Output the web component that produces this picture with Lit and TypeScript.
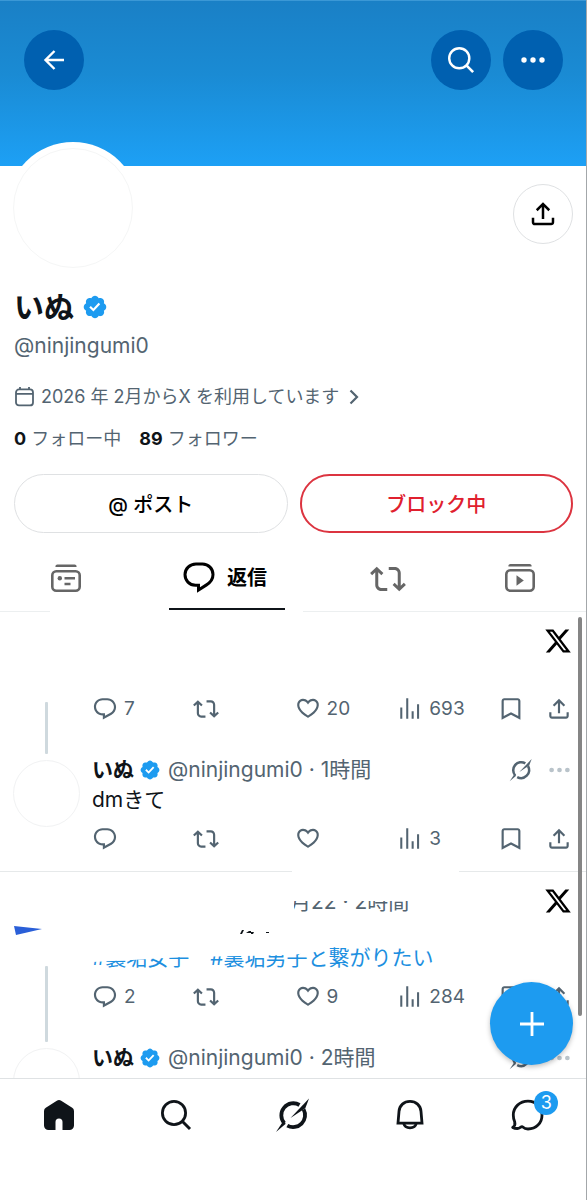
import { LitElement, html, css, svg } from "lit";
import { customElement, property } from "lit/decorators.js";

const BLUE = "#1d9bf0";

const icons: Record<string, { box: string; body: unknown }> = {
  back: {
    box: "0 0 20 20",
    body: svg`<path d="M10.5 1 1.5 10l9 9M2 10h18" fill="none" stroke="currentColor" stroke-width="2.4" />`,
  },
  search: {
    box: "0 0 30 30",
    body: svg`<circle cx="13" cy="13" r="11.6" fill="none" stroke="currentColor" stroke-width="2.8" /><path d="m21 21 8 8" fill="none" stroke="currentColor" stroke-width="3" />`,
  },
  dots: {
    box: "0 0 24 6",
    body: svg`<g fill="currentColor"><circle cx="3" cy="3" r="2.7" /><circle cx="12" cy="3" r="2.7" /><circle cx="21" cy="3" r="2.7" /></g>`,
  },
  share: {
    box: "0 0 24 24",
    body: svg`<path fill="currentColor" d="M12 2.59l5.7 5.7-1.41 1.42L13 6.41V16h-2V6.41l-3.3 3.3-1.41-1.42L12 2.59zM21 15l-.02 3.51c0 1.38-1.12 2.49-2.5 2.49H5.5C4.11 21 3 19.88 3 18.5V15h2v3.5c0 .28.22.5.5.5h12.98c.28 0 .5-.22.5-.5L19 15h2z" />`,
  },
  verified: {
    box: "1 1 20 20",
    body: svg`<path fill="${BLUE}" d="M20.396 11c-.018-.646-.215-1.275-.57-1.816-.354-.54-.852-.972-1.438-1.246.223-.607.27-1.264.14-1.897-.131-.634-.437-1.218-.882-1.687-.47-.445-1.053-.75-1.687-.882-.633-.13-1.29-.083-1.897.14-.273-.587-.704-1.086-1.245-1.44S11.647 1.62 11 1.604c-.646.017-1.273.213-1.813.568s-.969.854-1.24 1.44c-.608-.223-1.267-.272-1.902-.14-.635.13-1.22.436-1.69.882-.445.47-.749 1.055-.878 1.688-.13.633-.08 1.29.144 1.896-.587.274-1.087.705-1.443 1.245-.356.54-.555 1.17-.574 1.817.02.647.218 1.276.574 1.817.356.54.856.972 1.443 1.245-.224.606-.274 1.263-.144 1.896.13.634.433 1.218.877 1.688.47.443 1.054.747 1.687.878.633.132 1.29.084 1.897-.136.274.586.705 1.084 1.246 1.439.54.354 1.17.551 1.816.569.647-.016 1.276-.213 1.817-.567s.972-.854 1.245-1.44c.604.239 1.266.296 1.903.164.636-.132 1.22-.447 1.68-.907.46-.46.776-1.044.908-1.681s.075-1.299-.165-1.903c.586-.274 1.084-.705 1.439-1.246.354-.54.551-1.17.569-1.816zM9.662 14.85l-3.429-3.428 1.293-1.302 2.072 2.072 4.4-4.794 1.347 1.246z" />`,
  },
  calendar: {
    box: "0 0 20 20",
    body: svg`<g fill="none" stroke="currentColor" stroke-width="1.8"><rect x="2" y="2.4" width="17" height="16" rx="3" /><path d="M2 6.8h17M6 0v3M15 0v3" /></g>`,
  },
  chevron: {
    box: "0 0 10 16",
    body: svg`<path d="m1.5 1.5 6.5 6.5-6.5 6.5" fill="none" stroke="currentColor" stroke-width="2.2" />`,
  },
  posts: {
    box: "0 0 30 27",
    body: svg`<path d="M6.5 -.5h17a2 2 0 0 1 2 2.6h-21a2 2 0 0 1 2-2.6z" fill="currentColor" /><rect x="1.3" y="6.3" width="27.4" height="19.4" rx="4" fill="none" stroke="currentColor" stroke-width="2.6" /><circle cx="8.8" cy="13.2" r="2.2" fill="currentColor" /><path d="M13.5 13.2h10.5M13.5 19h6" stroke="currentColor" stroke-width="2.6" />`,
  },
  videos: {
    box: "0 0 30 27",
    body: svg`<path d="M5.5 -1h19a2 2 0 0 1 2 2.6h-23a2 2 0 0 1 2-2.6z" fill="currentColor" /><rect x="1.3" y="5.3" width="27.4" height="20.4" rx="4" fill="none" stroke="currentColor" stroke-width="2.6" /><path d="M11.500 10.300 18.800 15.500 11.500 20.700z" fill="currentColor" />`,
  },
  reply: {
    box: "0 0 24 24",
    body: svg`<path fill="currentColor" d="M1.751 10c0-4.42 3.584-8 8.005-8h4.366c4.49 0 8.129 3.64 8.129 8.13 0 2.96-1.607 5.68-4.196 7.11l-8.054 4.46v-3.69h-.067c-4.49.1-8.183-3.51-8.183-8.01zm8.005-6c-3.317 0-6.005 2.69-6.005 6 0 3.37 2.77 6.08 6.138 6.01l.351-.01h1.761v2.3l5.087-2.81c1.951-1.08 3.163-3.13 3.163-5.36 0-3.39-2.744-6.13-6.129-6.13H9.756z" />`,
  },
  replyBold: {
    box: "0 0 32 32",
    body: svg`<path fill="none" stroke="currentColor" stroke-width="3" d="M13 3h6.5C25.5 3 30 7.7 30 13.6c0 4.6-2.5 7.9-6.5 10.3L15.5 29v-4.8h-3C6.3 24.2 2 19.5 2 13.6 2 7.7 6.7 3 13 3z" />`,
  },
  repost: {
    box: "0 0 24 24",
    body: svg`<path fill="currentColor" d="M4.5 3.88l4.432 4.14-1.364 1.46L5.5 7.55V16c0 1.1.896 2 2 2H11.500v2H7.5c-2.209 0-4-1.79-4-4V7.55L1.432 9.48.068 8.02 4.5 3.88zM16.5 6H12.500V4h4c2.209 0 4 1.79 4 4v8.45l2.068-1.93 1.364 1.46-4.432 4.14-4.432-4.14 1.364-1.46 2.068 1.93V8c0-1.1-.896-2-2-2z" />`,
  },
  like: {
    box: "0 0 24 24",
    body: svg`<path fill="currentColor" d="M16.697 5.5c-1.222-.06-2.679.51-3.89 2.16l-.805 1.09-.806-1.09C9.984 6.01 8.526 5.44 7.304 5.5c-1.243.07-2.349.78-2.91 1.91-.552 1.12-.633 2.78.479 4.82 1.074 1.97 3.257 4.27 7.129 6.61 3.87-2.34 6.052-4.64 7.126-6.61 1.111-2.04 1.03-3.7.477-4.82-.561-1.13-1.666-1.84-2.908-1.91zm4.187 7.69c-1.351 2.48-4.001 5.12-8.379 7.67l-.503.3-.504-.3c-4.379-2.55-7.029-5.19-8.382-7.67-1.36-2.5-1.41-4.86-.514-6.67.887-1.79 2.647-2.91 4.601-3.01 1.651-.09 3.368.56 4.798 2.01 1.429-1.45 3.146-2.1 4.796-2.01 1.954.1 3.714 1.22 4.601 3.01.896 1.81.846 4.17-.514 6.67z" transform="translate(0 -.9)" />`,
  },
  views: {
    box: "0 0 24 24",
    body: svg`<path fill="currentColor" d="M8.5 21V2h1.9v19H8.5zM18.5 21V7.5h1.9V21h-1.9zM3 21V10.5h1.9V21H3zm10.5 0v-7h1.9v7h-1.9z" />`,
  },
  bookmark: {
    box: "0 0 24 24",
    body: svg`<path fill="currentColor" d="M3.3 4.5C3.3 3.12 4.4 2 5.8 2h12.4c1.4 0 2.5 1.12 2.5 2.5v17.44l-8.7-4.71-8.7 4.71V4.5zM5.8 4c-.3 0-.5.22-.5.5v14.06l6.7-3.6 6.7 3.6V4.5c0-.28-.2-.5-.5-.5H5.8z" />`,
  },
  grok: {
    box: "0 0 36 36",
    body: svg`<g fill="none" stroke="currentColor" stroke-width="3.8"><path d="M24.5 8A12 12 0 0 0 9.300 26.200" /><path d="M28.600 12.300A12 12 0 0 1 12.300 28.600" /></g><g fill="currentColor"><path d="M1 35 8 24.500l2.800 2.300z" /><path d="M34 1.500 15.500 21l14.800-9.800z" /></g>`,
  },
  xlogo: {
    box: "1 2 22 20",
    body: svg`<path fill="currentColor" d="M18.244 2.25h3.308l-7.227 8.26 8.502 11.24H16.17l-5.214-6.817L4.99 21.75H1.68l7.73-8.835L1.254 2.25H8.08l4.713 6.231zm-1.161 17.52h1.833L7.084 4.126H5.117z" />`,
  },
  plus: {
    box: "0 0 24 24",
    body: svg`<path d="M12 0v24M0 12h24" stroke="currentColor" stroke-width="2.800" />`,
  },
  home: {
    box: "0 0 30 30",
    body: svg`<path fill="currentColor" d="M12.8.8a4 4 0 0 1 4.4 0l11 7A4 4 0 0 1 30 11v14.5a4.5 4.5 0 0 1-4.5 4.5H18.5v-8a3.5 3.5 0 0 0-7 0v8H4.5A4.5 4.5 0 0 1 0 25.5V11a4 4 0 0 1 1.8-3.2z" />`,
  },
  bell: {
    box: "0 0 30 30",
    body: svg`<g fill="none" stroke="currentColor" stroke-width="2.8"><path d="M15 1.4c6 0 10.500 4 11 10l1 11.800H3l1-11.800c.5-6 5-10 11-10z" /><path d="M8.800 23.500a6.300 5.300 0 0 0 12.400 0" /></g>`,
  },
  chat: {
    box: "0 0 32 32",
    body: svg`<path fill="none" stroke="currentColor" stroke-width="2.8" stroke-linejoin="round" d="M17 2.200c8 0 14 6 14 14s-6 13.800-14 13.800c-2.200 0-3.800-.7-5.600-2.300-1.500-.6-2.400 1.800-5 1.800-1.800 0-3.400-.3-4.700-1 2-1.300 2.600-3.200 2-5.700C2.600 20.600 2.300 18.500 2.300 16 2.300 8 8.800 2.200 17 2.200z" />`,
  },
};

@customElement("x-icon")
class XIcon extends LitElement {
  @property() name = "";
  static styles = css`
    :host {
      display: inline-flex;
      flex: none;
    }
    .art {
      width: 100%;
      height: 100%;
      display: block;
      overflow: visible;
    }
  `;
  render() {
    const icon = icons[this.name];
    return html`<svg class="art" viewBox=${icon.box} aria-hidden="true">${icon.body}</svg>`;
  }
}

const base = css`
  * {
    box-sizing: border-box;
  }
  button {
    font: inherit;
    color: inherit;
    background: none;
    border: 0;
    padding: 0;
    margin: 0;
    display: flex;
    align-items: center;
    cursor: pointer;
  }
  a {
    color: inherit;
    text-decoration: none;
  }
`;

@customElement("post-actions")
class PostActions extends LitElement {
  @property() replies = "";
  @property() likes = "";
  @property() views = "";
  static styles = [
    base,
    css`
      .bar {
        display: grid;
        grid-template-columns: 101fr 102fr 103fr 101fr 48fr 24px;
        height: 26px;
        align-items: center;
        font-size: 19px;
        line-height: 26px;
        color: #536471;
      }
      .act {
        gap: 6px;
      }
      .act x-icon {
        width: 26px;
        height: 26px;
      }
    `,
  ];
  render() {
    const item = (icon: string, label: string, count = "") =>
      html`<button class="act" aria-label=${label}><x-icon name=${icon}></x-icon>${count ? html`<span>${count}</span>` : ""}</button>`;
    return html`<div class="bar">
      ${item("reply", "返信", this.replies)} ${item("repost", "リポスト")} ${item("like", "いいね", this.likes)}
      ${item("views", "表示", this.views)} ${item("bookmark", "ブックマーク")} ${item("share", "共有")}
    </div>`;
  }
}

@customElement("post-head")
class PostHead extends LitElement {
  @property() time = "";
  static styles = [
    base,
    css`
      .head {
        display: flex;
        align-items: center;
        height: 20px;
        font-size: 21px;
        line-height: 20px;
        color: #536471;
        white-space: nowrap;
      }
      .name {
        font-weight: 700;
        color: #0f1419;
      }
      .check {
        width: 20px;
        height: 20px;
        margin: 0 8px 0 6px;
      }
      .grok {
        margin-left: auto;
      }
      .grok x-icon {
        width: 24px;
        height: 24px;
      }
      .more {
        margin: 0 0 0 16px;
        color: #b9c3ca;
      }
      .more x-icon {
        width: 21px;
        height: 6px;
      }
    `,
  ];
  render() {
    return html`<div class="head">
      <span class="name">いぬ</span><x-icon class="check" name="verified"></x-icon>
      <span>@ninjingumi0 · ${this.time}</span>
      <button class="grok" aria-label="Grok"><x-icon name="grok"></x-icon></button>
      <button class="more" aria-label="その他"><x-icon name="dots"></x-icon></button>
    </div>`;
  }
}

@customElement("app-root")
class AppRoot extends LitElement {
  static styles = [
    base,
    css`
      :host {
        display: flex;
        flex-direction: column;
        height: 100vh;
        box-sizing: border-box;
        position: relative;
        overflow: hidden;
        background: #fff;
        border-right: 1px solid #a3a7aa;
        color: #0f1419;
        font-family: Inter, "Noto Sans CJK JP", sans-serif;
      }
      .banner {
        flex: none;
        height: 166px;
        padding: 29px 23px 0 24px;
        display: flex;
        gap: 12px;
        background: linear-gradient(#1a80c6, #1a8bd4 45%, #1da0f5);
        border-top: 1px solid #3b98d6;
        color: #fff;
      }
      .round {
        width: 60px;
        height: 60px;
        border-radius: 50%;
        justify-content: center;
        background: #0060b0;
      }
      .back {
        margin-right: auto;
      }
      .i20 {
        width: 20px;
        height: 20px;
      }
      .i26 {
        width: 26px;
        height: 26px;
      }
      .i30 {
        width: 30px;
        height: 30px;
      }
      .stack {
        width: 30px;
        height: 27px;
      }
      .dots {
        width: 24px;
        height: 6px;
      }
      .profile {
        flex: none;
        padding: 0 13px 0 14px;
      }
      .top {
        display: flex;
        justify-content: space-between;
        height: 119px;
      }
      .avatar {
        width: 132px;
        height: 132px;
        margin: -24px 0 0 -7px;
        padding: 6px;
        border-radius: 50%;
        background: #fff;
      }
      .ring {
        height: 120px;
        border-radius: 50%;
        border: 1px solid #f5f6f6;
      }
      .share {
        background: #fff;
        border: 1px solid #dfe1e3;
        margin-top: 18px;
        color: #000;
      }
      .title {
        display: flex;
        align-items: center;
        gap: 9px;
        height: 44px;
        margin: 0;
        font-size: 30px;
        line-height: 44px;
        font-weight: 700;
      }
      .check {
        width: 24px;
        height: 24px;
      }
      .handle {
        font-size: 21px;
        line-height: 30px;
        color: #536471;
        margin: 2px 0 22px;
      }
      .joined {
        font-size: 18px;
        line-height: 28px;
        color: #536471;
        gap: 7px;
      }
      .chev {
        width: 10px;
        height: 16px;
        margin-left: 3px;
      }
      .counts {
        display: flex;
        gap: 18px;
        margin-top: 14px;
        font-size: 18px;
        line-height: 28px;
        color: #536471;
      }
      .counts b {
        color: #0f1419;
        font-weight: 700;
      }
      .cta {
        display: grid;
        grid-template-columns: 1fr 1fr;
        gap: 12px;
        margin-top: 21px;
      }
      .pill {
        height: 59px;
        border-radius: 30px;
        border: 1px solid #dfe1e3;
        justify-content: center;
        font-size: 20px;
        font-weight: 500;
        color: #000;
      }
      .pill.block {
        color: #e0202e;
        border: 2px solid #dc3440;
      }
      .tabs {
        flex: none;
        display: grid;
        grid-template-columns: 132fr 190fr 132fr 132fr;
        height: 79px;
        color: #666;
        background: linear-gradient(90deg, #eceff0 50px, transparent 50px 303px, #eceff0 303px) bottom / 100% 1px no-repeat;
      }
      .tab {
        justify-content: center;
        padding-top: 12px;
      }
      .tab.on {
        color: #000;
      }
      .label {
        align-self: stretch;
        display: flex;
        align-items: center;
        gap: 12px;
        margin-bottom: 2px;
        padding: 0 18px 0 14px;
        border-bottom: 2px solid #0f1419;
        font-size: 20px;
        font-weight: 700;
      }
      .i36 {
        width: 36px;
        height: 36px;
      }
      .i32 {
        width: 32px;
        height: 32px;
      }
      .feed {
        flex: 1;
        min-height: 0;
        overflow: hidden;
        position: relative;
      }
      .thread {
        padding: 0 16px 0 13px;
        height: 260px;
        background: linear-gradient(90deg, #e6e9ea 292px, transparent 292px 459px, #e6e9ea 459px) bottom / 100% 1px no-repeat;
      }
      .row {
        display: grid;
        grid-template-columns: 67px 1fr;
        column-gap: 12px;
      }
      .gutter {
        display: flex;
        flex-direction: column;
        align-items: center;
      }
      .line {
        width: 3px;
        flex: 1;
        background: #cfd9de;
        border-radius: 1px;
      }
      .mini {
        width: 67px;
        height: 67px;
        border-radius: 50%;
        border: 1px solid #f1f2f3;
      }
      .mark {
        display: flex;
        justify-content: flex-end;
        margin-right: -1px;
        height: 84px;
        padding-top: 16px;
        color: #000;
      }
      .mark x-icon {
        width: 26px;
        height: 26px;
      }
      .upper {
        height: 148px;
      }
      .lower {
        height: 176px;
      }
      .upper .line {
        margin: 90px 0 6px;
      }
      .lower .line {
        margin: 94px 0 6px;
      }
      .text {
        font-size: 21px;
        line-height: 30px;
        margin: 5px 0 11px;
        color: #0f1419;
      }
      .meta {
        display: flex;
        height: 58px;
      }
      .meta .mark {
        height: auto;
      }
      .when {
        flex: 1;
        height: 30px;
        margin-top: 15px;
        padding-left: 198px;
        font-size: 21px;
        line-height: 30px;
        color: #536471;
        white-space: nowrap;
        clip-path: inset(14px 0 0 202px);
      }
      .scrap {
        display: block;
        width: 30px;
        height: 4px;
        margin-left: 147px;
      }
      .wedge {
        position: absolute;
        left: 14px;
        top: 314px;
        width: 28px;
        height: 9px;
      }
      .tags {
        display: block;
        margin: 9px 0 11px;
        font-size: 21px;
        line-height: 30px;
        height: 30px;
        color: #1d8fe0;
        white-space: nowrap;
        clip-path: polygon(0 19px, 40px 17px, 90px 14px, 200px 12px, 232px 8px, 240px 0, 100% 0, 100% 100%, 0 100%);
      }
      .thumb {
        position: absolute;
        right: 4px;
        top: 5px;
        width: 4px;
        height: 399px;
        border-radius: 2px;
        background: #858585;
      }
      .fab {
        position: absolute;
        right: 13px;
        bottom: 135px;
        width: 83px;
        height: 83px;
        border-radius: 50%;
        justify-content: center;
        background: #1d9bf0;
        color: #fff;
        box-shadow: 0 2px 5px rgba(0, 0, 0, 0.25);
      }
      .i24 {
        width: 24px;
        height: 24px;
      }
      .nav {
        flex: none;
        display: grid;
        grid-template-columns: repeat(5, 1fr);
        height: 122px;
        padding: 18px 0 68px;
        border-top: 1px solid #dfe2e4;
        background: #fff;
      }
      .nav button {
        justify-content: center;
        position: relative;
      }
      .badge {
        position: absolute;
        left: 50%;
        top: -6px;
        margin-left: 7px;
        width: 24px;
        height: 24px;
        border-radius: 50%;
        background: #1d9bf0;
        color: #fff;
        font-size: 18px;
        line-height: 24px;
        text-align: center;
      }
    `,
  ];

  render() {
    return html`
      <header class="banner">
        <button class="round back" aria-label="戻る"><x-icon class="i20" name="back"></x-icon></button>
        <button class="round" aria-label="検索"><x-icon class="i26" name="search"></x-icon></button>
        <button class="round" aria-label="その他"><x-icon class="dots" name="dots"></x-icon></button>
      </header>
      <section class="profile">
        <div class="top">
          <div class="avatar"><div class="ring"></div></div>
          <button class="round share" aria-label="共有"><x-icon class="i30" name="share"></x-icon></button>
        </div>
        <h1 class="title">いぬ<x-icon class="check" name="verified"></x-icon></h1>
        <div class="handle">@ninjingumi0</div>
        <button class="joined">
          <x-icon class="i20" name="calendar"></x-icon>
          <span>2026 年 2月からX を利用しています</span>
          <x-icon class="chev" name="chevron"></x-icon>
        </button>
        <div class="counts">
          <a href="#following"><b>0</b> フォロー中</a>
          <a href="#followers"><b>89</b> フォロワー</a>
        </div>
        <div class="cta">
          <button class="pill">@ ポスト</button>
          <button class="pill block">ブロック中</button>
        </div>
      </section>
      <nav class="tabs">
        <button class="tab" aria-label="ポスト"><x-icon class="stack" name="posts"></x-icon></button>
        <button class="tab on"><span class="label"><x-icon class="i32" name="replyBold"></x-icon>返信</span></button>
        <button class="tab" aria-label="リポスト"><x-icon class="i36" name="repost"></x-icon></button>
        <button class="tab" aria-label="動画"><x-icon class="stack" name="videos"></x-icon></button>
      </nav>
      <main class="feed">
        <article class="thread">
          <div class="row upper">
            <div class="gutter"><span class="line"></span></div>
            <div>
              <div class="mark"><x-icon name="xlogo"></x-icon></div>
              <post-actions replies="7" likes="20" views="693"></post-actions>
            </div>
          </div>
          <div class="row">
            <div class="gutter"><span class="mini"></span></div>
            <div>
              <post-head time="1時間"></post-head>
              <p class="text">dmきて</p>
              <post-actions views="3"></post-actions>
            </div>
          </div>
        </article>
        <article class="thread">
          <div class="row lower">
            <div class="gutter"><span class="line"></span></div>
            <div>
              <div class="meta">
                <span class="when">月22 · 2時間</span>
                <div class="mark"><x-icon name="xlogo"></x-icon></div>
              </div>
              <svg class="scrap" viewBox="0 0 30 4" aria-hidden="true">
                <path d="M1 4 3 0h2L3 4zM7 3l3-2h2v2zM12 2h3l-1 2h-2zM27 2h3v1h-3z" fill="#0f1419" />
              </svg>
              <a class="tags" href="#tags">#裏垢女子　#裏垢男子と繋がりたい</a>
              <post-actions replies="2" likes="9" views="284"></post-actions>
            </div>
          </div>
          <div class="row">
            <div class="gutter"><span class="mini"></span></div>
            <div><post-head time="2時間"></post-head></div>
          </div>
        </article>
        <svg class="wedge" viewBox="0 0 28 9" aria-hidden="true"><path d="M0 0 28 3 2 9z" fill="#2a5fd8" /></svg>
        <span class="thumb"></span>
      </main>
      <button class="fab" aria-label="ポストする"><x-icon class="i24" name="plus"></x-icon></button>
      <nav class="nav">
        <button aria-label="ホーム"><x-icon class="i30" name="home"></x-icon></button>
        <button aria-label="検索"><x-icon class="i30" name="search"></x-icon></button>
        <button aria-label="Grok"><x-icon class="i36" name="grok"></x-icon></button>
        <button aria-label="通知"><x-icon class="i30" name="bell"></x-icon></button>
        <button aria-label="チャット"><x-icon class="i32" name="chat"></x-icon><span class="badge">3</span></button>
      </nav>
    `;
  }
}
